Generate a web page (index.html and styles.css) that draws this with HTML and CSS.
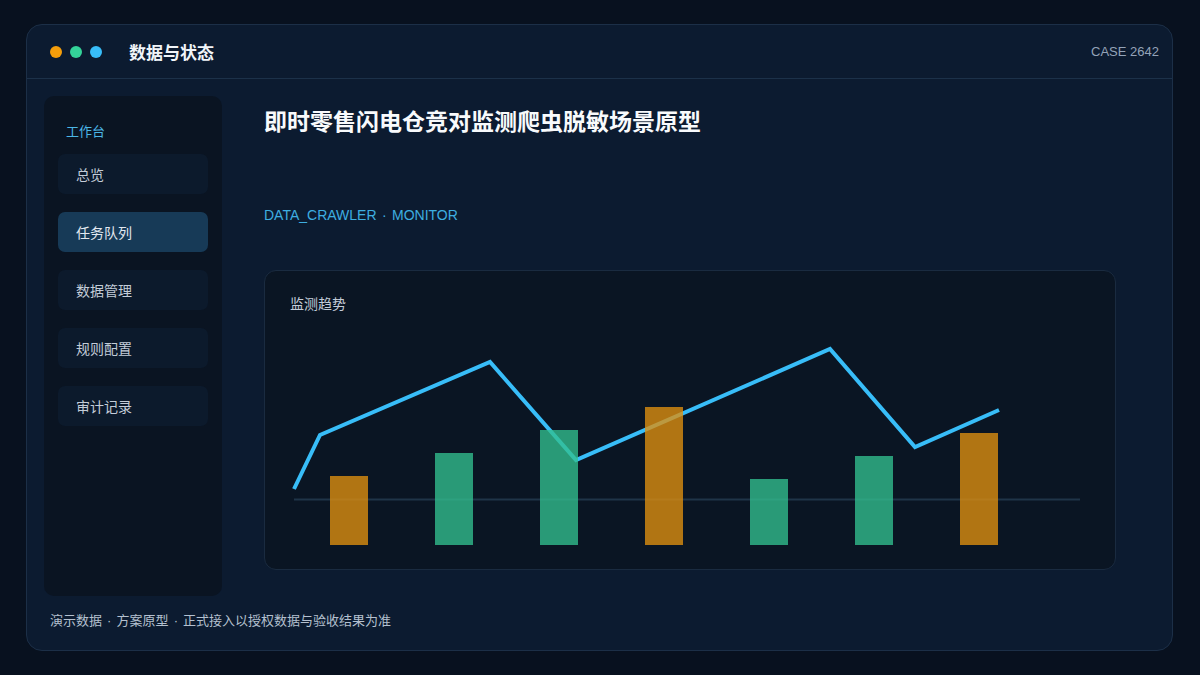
FILE: index.html
```html
<!DOCTYPE html>
<html lang="zh-CN">
<head>
<meta charset="utf-8">
<title>数据与状态</title>
<link rel="stylesheet" href="styles.css">
</head>
<body>
<div class="frame">
  <header class="topbar">
    <div class="dots">
      <span class="dot dot-orange"></span>
      <span class="dot dot-green"></span>
      <span class="dot dot-blue"></span>
    </div>
    <div class="app-title">数据与状态</div>
    <div class="case">CASE 2642</div>
  </header>
  <div class="body">
    <aside class="sidebar">
      <div class="side-label">工作台</div>
      <nav class="nav">
        <div class="nav-item">总览</div>
        <div class="nav-item active">任务队列</div>
        <div class="nav-item">数据管理</div>
        <div class="nav-item">规则配置</div>
        <div class="nav-item">审计记录</div>
      </nav>
    </aside>
    <main class="main">
      <h1 class="title">即时零售闪电仓竞对监测爬虫脱敏场景原型</h1>
      <div class="subtitle">DATA_CRAWLER · MONITOR</div>
      <section class="card">
        <div class="card-label">监测趋势</div>
        <svg class="chart" width="800" height="240" viewBox="0 0 800 240">
          <line x1="4" y1="179.5" x2="790" y2="179.5" stroke="#1f3448" stroke-width="2"/>
          <polyline points="4,169 30,115 200,42 286,140 540,29 625,127 709,90" fill="none" stroke="#38bdf8" stroke-width="4" stroke-linejoin="miter"/>
          <g class="bars">
            <rect x="40" y="156" width="38" height="69" fill="#e0900f"/>
            <rect x="145" y="133" width="38" height="92" fill="#32c08f"/>
            <rect x="250" y="110" width="38" height="115" fill="#32c08f"/>
            <rect x="355" y="87" width="38" height="138" fill="#e0900f"/>
            <rect x="460" y="159" width="38" height="66" fill="#32c08f"/>
            <rect x="565" y="136" width="38" height="89" fill="#32c08f"/>
            <rect x="670" y="113" width="38" height="112" fill="#e0900f"/>
          </g>
        </svg>
      </section>
    </main>
  </div>
  <footer class="footer">演示数据 · 方案原型 · 正式接入以授权数据与验收结果为准</footer>
</div>
</body>
</html>
```

FILE: styles.css
```css
* { box-sizing: border-box; }
html, body { margin: 0; padding: 0; }
body {
  background: #08111f;
  width: 1200px;
  height: 675px;
  overflow: hidden;
  padding: 24px 27px 24px 26px;
  font-family: "Liberation Sans", "Noto Sans CJK SC", sans-serif;
}
.frame {
  width: 1147px;
  height: 627px;
  background: #0c1b30;
  border: 1px solid #1c2f47;
  border-radius: 16px;
  display: flex;
  flex-direction: column;
  overflow: hidden;
}
.topbar {
  height: 54px;
  flex: none;
  border-bottom: 1px solid #1c3149;
  display: flex;
  align-items: center;
  padding: 0 13px 0 23px;
}
.dots { display: flex; gap: 8px; }
.dot { width: 12px; height: 12px; border-radius: 50%; display: block; }
.dot-orange { background: #f59e0b; }
.dot-green { background: #34d399; }
.dot-blue { background: #38bdf8; }
.app-title {
  margin-left: 27px;
  color: #f1f5f9;
  font-size: 17px;
  line-height: 24px;
  font-weight: 700;
  font-family: "Noto Sans CJK SC", sans-serif;
}
.case {
  margin-left: auto;
  color: #94a3b8;
  font-size: 13px;
}
.body {
  flex: none;
  height: 517px;
  padding: 17px 18px 0 17px;
  display: flex;
}
.sidebar {
  width: 178px;
  height: 500px;
  background: #0a1422;
  border-radius: 10px;
  padding: 20px 14px;
}
.side-label {
  color: #4cb6e6;
  font-size: 13px;
  line-height: 30px;
  padding-left: 8px;
  font-family: "Noto Sans CJK SC", sans-serif;
}
.nav {
  margin-top: 8px;
  display: flex;
  flex-direction: column;
  gap: 18px;
}
.nav-item {
  height: 40px;
  border-radius: 7px;
  background: #0c1a2c;
  color: #c3ccd8;
  font-size: 14px;
  line-height: 40px;
  padding-left: 18px;
  font-family: "Noto Sans CJK SC", sans-serif;
}
.nav-item.active {
  background: #173a57;
  color: #e2e8f0;
}
.main {
  flex: 1;
  padding: 9px 38px 0 42px;
}
.title {
  margin: 0;
  color: #f8fafc;
  font-size: 23px;
  line-height: 30px;
  font-weight: 700;
  font-family: "Noto Sans CJK SC", sans-serif;
}
.subtitle {
  margin-top: 70px;
  color: #3eaee0;
  font-size: 14px;
  line-height: 20px;
  word-spacing: 1.5px;
}
.card {
  margin-top: 45px;
  height: 300px;
  background: #0a1523;
  border: 1px solid #1a2b40;
  border-radius: 12px;
  padding: 23px 25px 0 25px;
}
.card-label {
  color: #c3ccd8;
  font-size: 14px;
  line-height: 18px;
  font-family: "Noto Sans CJK SC", sans-serif;
}
.chart {
  display: block;
  margin-top: 8px;
}
.bars { opacity: 0.78; }
.footer {
  flex: none;
  padding: 15px 23px 0 23px;
  color: #b4c0cf;
  font-size: 13px;
  line-height: 20px;
  word-spacing: 1.5px;
  font-family: "Liberation Sans", "Noto Sans CJK SC", sans-serif;
}
```
